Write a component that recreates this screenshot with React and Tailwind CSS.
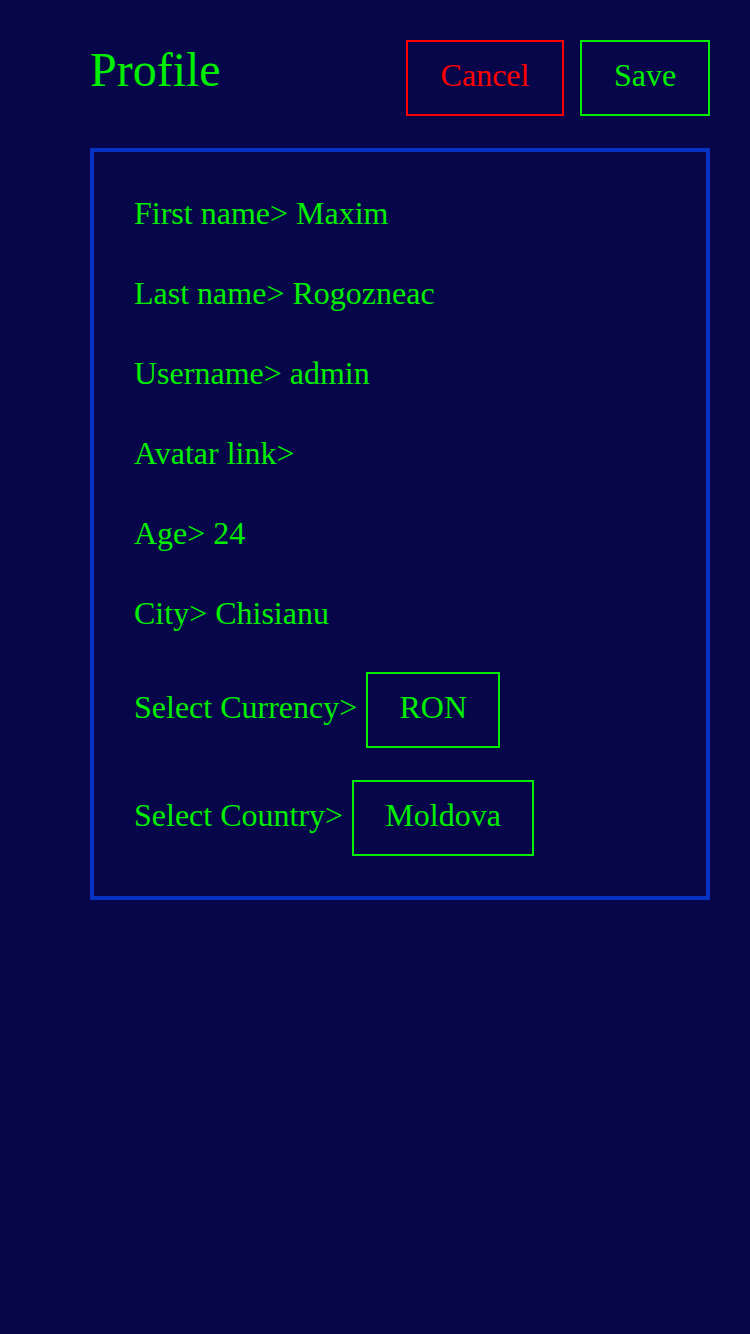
const fields = [
  ["First name", "Maxim"],
  ["Last name", "Rogozneac"],
  ["Username", "admin"],
  ["Avatar link", ""],
  ["Age", "24"],
  ["City", "Chisianu"],
]

export default function App() {
  return (
    <div
      className="min-h-screen bg-[#08064a] pt-10 pl-[90px] pr-10 text-[#00ee00]"
      style={{ fontFamily: '"Liberation Serif", serif' }}
    >
      <div className="flex items-baseline justify-between">
        <h1 className="text-[48px] leading-[56px]">Profile</h1>
        <div className="flex gap-4">
          <button className="w-[158px] border-2 border-[#ff0000] pt-[13px] pb-[19px] text-[32px] leading-10 text-[#ff0000]">
            Cancel
          </button>
          <button className="w-[130px] border-2 border-[#00ee00] pt-[13px] pb-[19px] text-[32px] leading-10">
            Save
          </button>
        </div>
      </div>

      <div className="mt-8 border-4 border-[#0433c4] px-10 pt-[41px] pb-10 text-[32px] leading-10">
        <div className="flex flex-col gap-10">
          {fields.map(([label, value]) => (
            <div key={label} className="h-10">
              {label}&gt; {value}
            </div>
          ))}
        </div>

        <div className="mt-[39px] flex items-start">
          <span className="pt-[15px]">Select Currency&gt;</span>
          <span className="ml-[9px] w-[134px] border-2 border-[#00ee00] pt-[13px] pb-[19px] text-center">RON</span>
        </div>

        <div className="mt-8 flex items-start">
          <span className="pt-[15px]">Select Country&gt;</span>
          <span className="ml-[9px] w-[182px] border-2 border-[#00ee00] pt-[13px] pb-[19px] text-center">Moldova</span>
        </div>
      </div>
    </div>
  )
}
